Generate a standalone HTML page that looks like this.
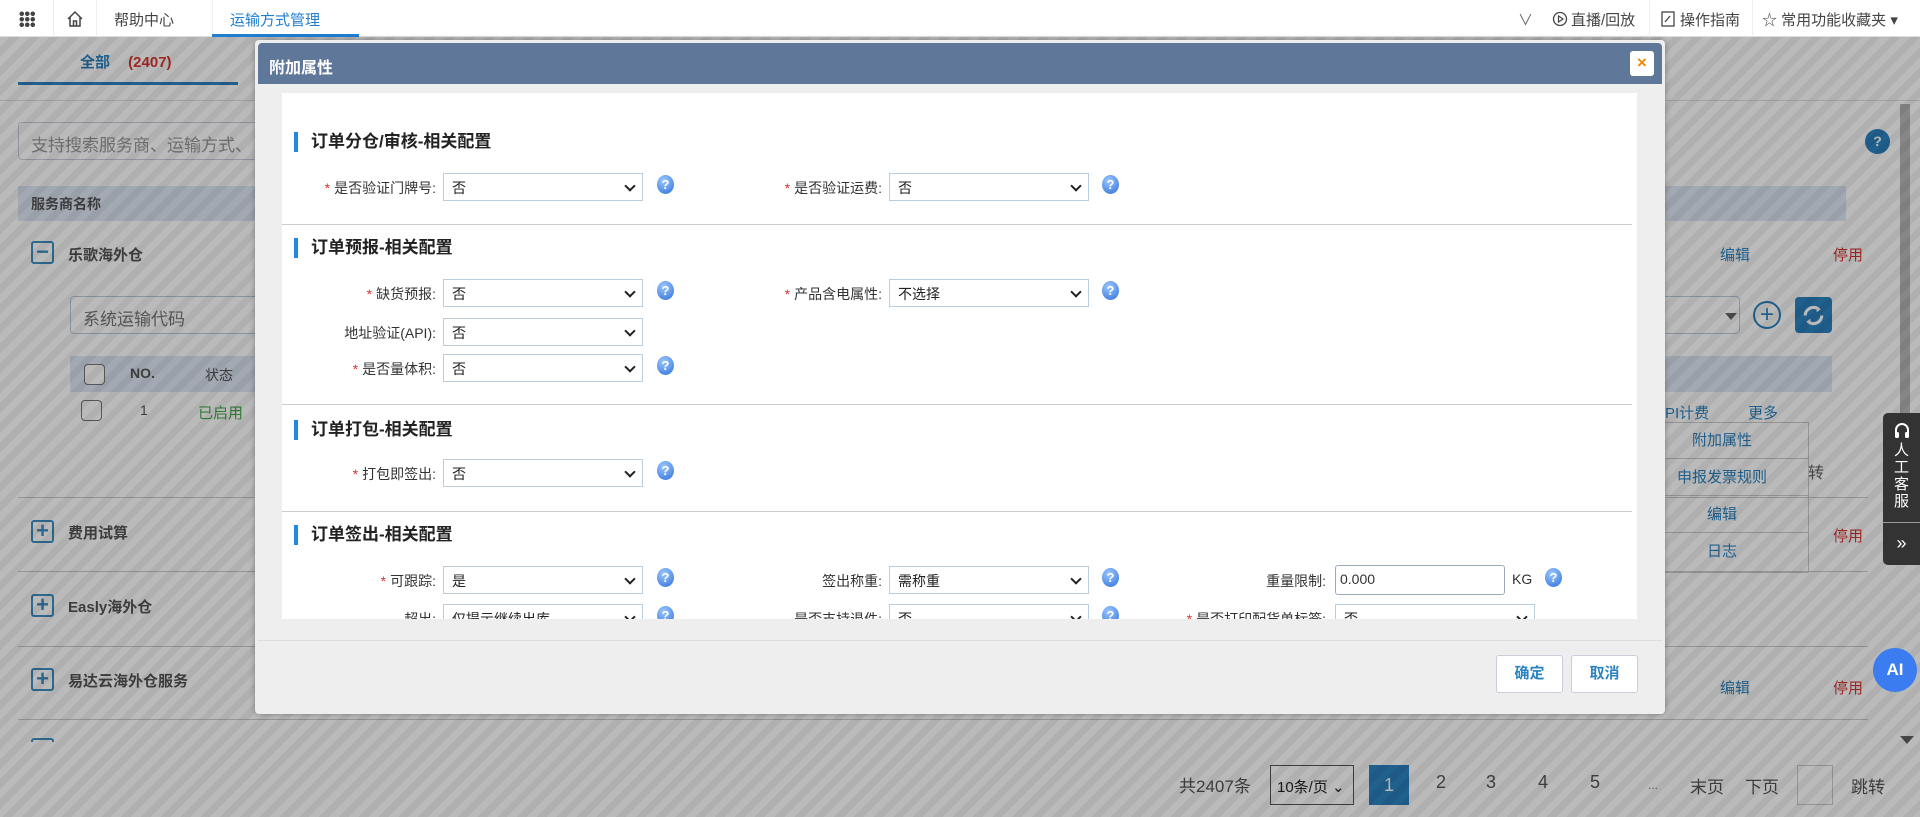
<!DOCTYPE html>
<html><head><meta charset="utf-8">
<style>
*{box-sizing:border-box;margin:0;padding:0}
body{width:1920px;height:817px;overflow:hidden;position:relative;background:#fff;font-family:"Liberation Sans","Noto Sans CJK SC",sans-serif;font-size:14px;color:#333}
.a{position:absolute;white-space:nowrap}
.top{position:absolute;left:0;top:0;width:1920px;height:37px;background:#fff;border-bottom:1px solid #ddd;font-size:15px;color:#444}
.ov{position:absolute;left:0;top:37px;width:1920px;height:780px;background:repeating-linear-gradient(135deg,rgba(0,0,0,.27) 0 7px,rgba(0,0,0,.31) 7px 14px)}
.blue{color:#2b83c0}.red{color:#d9362e}
.sel{position:absolute;height:28px;border:1px solid #b9cfe0;background:#fff;font-size:14px;padding:4px 8px;color:#222}
.sel::after{content:"";position:absolute;right:8px;top:8px;width:6px;height:6px;border-right:2px solid #222;border-bottom:2px solid #222;transform:rotate(45deg)}
.q{position:absolute;width:17px;height:19px;border-radius:50%;background:radial-gradient(circle at 40% 30%,#9cc7ff,#2d6fd8);color:#fff;font-size:13px;font-weight:bold;text-align:center;line-height:19px}
.lb{position:absolute;text-align:right;font-size:14px;color:#333;white-space:nowrap}
.lb i{color:#d33;font-style:normal;margin-right:4px}
.tt{position:absolute;left:294px;font-size:17px;font-weight:bold;color:#222;border-left:4px solid #1e8be0;padding-left:13px;line-height:20px}
.hr{position:absolute;left:282px;width:1350px;height:1px;background:#ccc}
.sq{position:absolute;width:23px;height:23px;border:2px solid #3e8fc4;border-radius:3px;color:#3e8fc4;font-size:22px;line-height:17px;text-align:center;font-weight:bold}
.ln{position:absolute;left:18px;width:1850px;height:1px;background:#ccc}
.mn{position:absolute;left:1635px;width:174px;height:37px;border-bottom:1px solid #ccc;text-align:center;line-height:37px;color:#2b83c0;font-size:15px}
</style></head><body>
<div class="a blue" style="left:80px;top:51px;font-size:15px;font-weight:bold">全部 <span class="red" style="margin-left:14px">(2407)</span></div>
<div class="a" style="left:18px;top:82px;width:220px;height:3px;background:#2b83c0"></div>
<div class="a" style="left:0;top:100px;width:1920px;height:1px;background:#ddd"></div>
<div class="a" style="left:18px;top:122px;width:300px;height:38px;border:1px solid #ccd;border-radius:4px;padding:8px 12px;color:#999;font-size:17px">支持搜索服务商、运输方式、</div>
<div class="a" style="left:1865px;top:129px;width:25px;height:25px;border-radius:50%;background:#2b83c0;color:#fff;text-align:center;line-height:25px;font-weight:bold">?</div>
<div class="a" style="left:18px;top:186px;width:1828px;height:35px;background:#dfe8f5"></div>
<div class="a" style="left:31px;top:194px;font-size:14px;font-weight:bold;color:#555">服务商名称</div>
<div class="sq" style="left:31px;top:241px">−</div>
<div class="a" style="left:68px;top:244px;font-size:15px;font-weight:bold;color:#555">乐歌海外仓</div>
<div class="a blue" style="left:1720px;top:244px;font-size:15px">编辑</div>
<div class="a red" style="left:1833px;top:244px;font-size:15px">停用</div>
<div class="a" style="left:70px;top:296px;width:1670px;height:38px;border:1px solid #bcd;border-radius:4px;padding:8px 12px;color:#777;font-size:17px">系统运输代码</div>
<div class="a" style="left:1725px;top:313px;border:6px solid transparent;border-top:7px solid #666"></div>
<div class="a" style="left:1753px;top:301px;width:28px;height:28px;border:2px solid #2b83c0;border-radius:50%;color:#2b83c0;text-align:center;line-height:23px;font-size:24px">+</div>
<div class="a" style="left:1795px;top:297px;width:37px;height:36px;background:#2b83c0;border-radius:4px"></div>
<svg class="a" style="left:1801px;top:303px" width="25" height="25" viewBox="0 0 24 24"><path d="M4 12a8 8 0 0 1 13-6M20 12a8 8 0 0 1-13 6" fill="none" stroke="#fff" stroke-width="3"/><path d="M15 3l4 3-4 3zM9 21l-4-3 4-3z" fill="#fff"/></svg>
<div class="a" style="left:70px;top:356px;width:1762px;height:36px;background:#dfe8f5"></div>
<div class="a" style="left:84px;top:364px;width:21px;height:21px;border:1px solid #777;border-radius:4px;background:#fff"></div>
<div class="a" style="left:130px;top:365px;font-weight:bold;color:#555">NO.</div>
<div class="a" style="left:205px;top:365px;color:#555">状态</div>
<div class="a" style="left:81px;top:400px;width:21px;height:21px;border:1px solid #777;border-radius:4px;background:#fff"></div>
<div class="a" style="left:140px;top:402px;color:#555">1</div>
<div class="a" style="left:198px;top:402px;color:#4a4;font-size:15px">已启用</div>
<div class="a blue" style="left:1665px;top:402px;font-size:15px">PI计费</div>
<div class="a blue" style="left:1748px;top:402px;font-size:15px">更多</div>
<div class="a" style="left:1635px;top:422px;width:174px;height:151px;border:1px solid #ccc;background:#fff"></div>
<div class="mn" style="top:422px">附加属性</div><div class="mn" style="top:459px">申报发票规则</div><div class="mn" style="top:496px">编辑</div><div class="mn" style="top:533px;border:0">日志</div>
<div class="a" style="left:1808px;top:459px;font-size:16px;color:#666">转</div>
<div class="ln" style="top:497px"></div>
<div class="sq" style="left:31px;top:520px">+</div><div class="a" style="left:68px;top:522px;font-weight:bold;color:#555;font-size:15px">费用试算</div>
<div class="a red" style="left:1833px;top:525px;font-size:15px">停用</div>
<div class="ln" style="top:571px"></div>
<div class="sq" style="left:31px;top:594px">+</div><div class="a" style="left:68px;top:596px;font-weight:bold;color:#555;font-size:15px">Easly海外仓</div>
<div class="ln" style="top:646px"></div>
<div class="sq" style="left:31px;top:668px">+</div><div class="a" style="left:68px;top:670px;font-weight:bold;color:#555;font-size:15px">易达云海外仓服务</div>
<div class="a blue" style="left:1720px;top:677px;font-size:15px">编辑</div>
<div class="a red" style="left:1833px;top:677px;font-size:15px">停用</div>
<div class="ln" style="top:719px"></div>
<div class="a" style="left:31px;top:738px;width:23px;height:4px;border:2px solid #3e8fc4;border-bottom:0;border-radius:3px 3px 0 0"></div>
<div class="a" style="left:1900px;top:104px;width:10px;height:460px;background:#b8b8b8"></div>
<div class="a" style="left:1900px;top:736px;border:7px solid transparent;border-top:8px solid #666"></div>
<div class="a" style="left:1179px;top:772px;font-size:17px;color:#555">共2407条</div>
<div class="a" style="left:1270px;top:765px;width:84px;height:40px;border:1px solid #555;padding:10px 6px;font-size:15px;color:#222">10条/页 ⌄</div>
<div class="a" style="left:1369px;top:765px;width:40px;height:40px;background:#2b83c0;color:#fff;text-align:center;line-height:40px;font-size:18px">1</div>
<div class="a" style="left:1436px;top:772px;font-size:18px;color:#555">2</div>
<div class="a" style="left:1486px;top:772px;font-size:18px;color:#555">3</div>
<div class="a" style="left:1538px;top:772px;font-size:18px;color:#555">4</div>
<div class="a" style="left:1590px;top:772px;font-size:18px;color:#555">5</div>
<div class="a" style="left:1648px;top:778px;font-size:12px;color:#777">...</div>
<div class="a" style="left:1690px;top:773px;font-size:17px;color:#555">末页</div>
<div class="a" style="left:1745px;top:773px;font-size:17px;color:#555">下页</div>
<div class="a" style="left:1797px;top:765px;width:36px;height:40px;border:1px solid #ccc"></div>
<div class="a" style="left:1851px;top:773px;font-size:17px;color:#555">跳转</div>
<div class="ov"></div>
<div class="a" style="left:1883px;top:413px;width:37px;height:152px;background:#333;border-radius:5px 0 0 5px;color:#fff;text-align:center;font-size:15px;line-height:17px;padding-top:8px">
<svg width="20" height="20" viewBox="0 0 20 20" style="display:block;margin:0 auto 1px"><path d="M4 12V9a6 6 0 0 1 12 0v3" fill="none" stroke="#fff" stroke-width="2"/><rect x="3" y="11" width="4" height="6" rx="1.5" fill="#fff"/><rect x="13" y="11" width="4" height="6" rx="1.5" fill="#fff"/></svg>人<br>工<br>客<br>服<div style="border-top:1px solid #999;margin-top:12px;padding-top:12px;font-size:18px">»</div></div>
<div class="a" style="left:1873px;top:648px;width:44px;height:44px;border-radius:50%;background:#3b7cf0;color:#fff;font-weight:bold;font-size:17px;text-align:center;line-height:44px">AI</div>
<div class="top">
 <div class="a" style="left:19px;top:11px;width:16px;height:16px;background:radial-gradient(circle,#444 55%,transparent 60%) 0 0/5.5px 5.5px"></div>
 <div class="a" style="left:53px;top:0;width:1px;height:37px;background:#eee"></div>
 <svg class="a" style="left:65px;top:9px" width="20" height="20" viewBox="0 0 20 20"><path d="M3 10 L10 3 L17 10 M5 8 V17 H15 V8 M8.5 17 V12 H11.5 V17" fill="none" stroke="#444" stroke-width="1.5"/></svg>
 <div class="a" style="left:96px;top:0;width:1px;height:37px;background:#eee"></div>
 <div class="a" style="left:114px;top:9px">帮助中心</div>
 <div class="a" style="left:212px;top:0;width:1px;height:37px;background:#eee"></div>
 <div class="a" style="left:230px;top:9px;color:#1f7ed0">运输方式管理</div>
 <div class="a" style="left:212px;top:34px;width:147px;height:3px;background:#1f7ed0"></div>
 <div class="a" style="left:1518px;top:9px;color:#666">∨</div>
 <svg class="a" style="left:1552px;top:11px" width="16" height="16" viewBox="0 0 16 16"><circle cx="8" cy="8" r="6.5" fill="none" stroke="#444" stroke-width="1.3"/><path d="M6.5 5v6l4.5-3z" fill="none" stroke="#444" stroke-width="1.2"/></svg>
 <div class="a" style="left:1571px;top:9px">直播/回放</div>
 <div class="a" style="left:1649px;top:0;width:1px;height:37px;background:#eee"></div>
 <svg class="a" style="left:1661px;top:11px" width="14" height="16" viewBox="0 0 14 16"><rect x="1" y="1" width="12" height="14" fill="none" stroke="#444" stroke-width="1.3"/><path d="M4 11l5-6" stroke="#444" stroke-width="1.3"/></svg>
 <div class="a" style="left:1680px;top:9px">操作指南</div>
 <div class="a" style="left:1752px;top:0;width:1px;height:37px;background:#eee"></div>
 <div class="a" style="left:1762px;top:9px">☆ 常用功能收藏夹 ▾</div>
</div>
<div class="a" style="left:255px;top:40px;width:1410px;height:674px;background:#eee;border-radius:4px;box-shadow:0 0 6px rgba(0,0,0,.3)"></div>
<div class="a" style="left:258px;top:43px;width:1404px;height:41px;background:#5f7799;border-radius:4px 4px 0 0;color:#fff;font-weight:bold;font-size:16px;padding:11px 11px">附加属性</div>
<div class="a" style="left:1630px;top:51px;width:24px;height:25px;background:#fff;border-radius:3px;color:#f08a00;font-weight:bold;text-align:center;line-height:24px;font-size:17px">×</div>
<div class="a" style="left:282px;top:93px;width:1355px;height:526px;background:#fff;overflow:hidden">
 <div style="position:absolute;left:-282px;top:-93px;width:1920px;height:817px">
  <div class="tt" style="top:132px">订单分仓/审核-相关配置</div>
  <div class="lb" style="right:1484px;top:178px"><i>*</i>是否验证门牌号:</div>
  <div class="sel" style="left:443px;top:173px;width:200px">否</div><div class="q" style="left:657px;top:175px">?</div>
  <div class="lb" style="right:1038px;top:178px"><i>*</i>是否验证运费:</div>
  <div class="sel" style="left:889px;top:173px;width:200px">否</div><div class="q" style="left:1102px;top:175px">?</div>
  <div class="hr" style="top:224px"></div>
  <div class="tt" style="top:238px">订单预报-相关配置</div>
  <div class="lb" style="right:1484px;top:284px"><i>*</i>缺货预报:</div>
  <div class="sel" style="left:443px;top:279px;width:200px">否</div><div class="q" style="left:657px;top:281px">?</div>
  <div class="lb" style="right:1038px;top:284px"><i>*</i>产品含电属性:</div>
  <div class="sel" style="left:889px;top:279px;width:200px">不选择</div><div class="q" style="left:1102px;top:281px">?</div>
  <div class="lb" style="right:1484px;top:323px">地址验证(API):</div>
  <div class="sel" style="left:443px;top:318px;width:200px">否</div>
  <div class="lb" style="right:1484px;top:359px"><i>*</i>是否量体积:</div>
  <div class="sel" style="left:443px;top:354px;width:200px">否</div><div class="q" style="left:657px;top:356px">?</div>
  <div class="hr" style="top:404px"></div>
  <div class="tt" style="top:420px">订单打包-相关配置</div>
  <div class="lb" style="right:1484px;top:464px"><i>*</i>打包即签出:</div>
  <div class="sel" style="left:443px;top:459px;width:200px">否</div><div class="q" style="left:657px;top:461px">?</div>
  <div class="hr" style="top:511px"></div>
  <div class="tt" style="top:525px">订单签出-相关配置</div>
  <div class="lb" style="right:1484px;top:571px"><i>*</i>可跟踪:</div>
  <div class="sel" style="left:443px;top:566px;width:200px">是</div><div class="q" style="left:657px;top:568px">?</div>
  <div class="lb" style="right:1038px;top:571px">签出称重:</div>
  <div class="sel" style="left:889px;top:566px;width:200px">需称重</div><div class="q" style="left:1102px;top:568px">?</div>
  <div class="lb" style="right:594px;top:571px">重量限制:</div>
  <div class="a" style="left:1335px;top:565px;width:170px;height:30px;border:1px solid #9ab;border-radius:3px;padding:5px 4px;font-size:14px">0.000</div>
  <div class="a" style="left:1512px;top:571px">KG</div><div class="q" style="left:1545px;top:568px">?</div>
  <div class="lb" style="right:1484px;top:609px">超出:</div>
  <div class="sel" style="left:443px;top:604px;width:200px">仅提示继续出库</div><div class="q" style="left:657px;top:606px">?</div>
  <div class="lb" style="right:1038px;top:609px">是否支持退件:</div>
  <div class="sel" style="left:889px;top:604px;width:200px">否</div><div class="q" style="left:1102px;top:606px">?</div>
  <div class="lb" style="right:594px;top:609px"><i>*</i>是否打印配货单标签:</div>
  <div class="sel" style="left:1335px;top:604px;width:200px">否</div>
 </div>
</div>
<div class="a" style="left:258px;top:640px;width:1404px;height:1px;background:#ddd"></div>
<div class="a" style="left:1496px;top:655px;width:67px;height:38px;border:1px solid #ccd;border-radius:3px;background:#fff;color:#2b83c0;font-weight:bold;text-align:center;line-height:36px;font-size:15px">确定</div>
<div class="a" style="left:1571px;top:655px;width:67px;height:38px;border:1px solid #ccd;border-radius:3px;background:#fff;color:#2b83c0;font-weight:bold;text-align:center;line-height:36px;font-size:15px">取消</div>
</body></html>
